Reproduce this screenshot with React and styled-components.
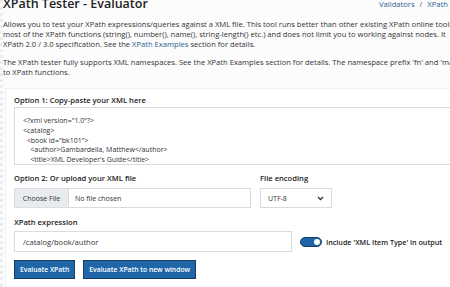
import React from 'react';
import styled, { createGlobalStyle } from 'styled-components';

const GlobalStyle = createGlobalStyle`
  html, body {
    margin: 0;
    padding: 0;
    background: #fcfcfd;
    overflow: hidden;
  }
  body {
    font-family: "Open Sans", "Liberation Sans", sans-serif;
    color: #333;
  }
`;

const Page = styled.div`
  width: 450px;
  height: 287px;
  overflow: hidden;
  border-left: 3px dotted #ececef;
  box-sizing: border-box;
`;

const Header = styled.div`
  display: flex;
  justify-content: space-between;
  align-items: center;
  margin-top: -3px;
  height: 13px;
  white-space: nowrap;
`;

const Title = styled.h1`
  margin: 0;
  font-size: 12.5px;
  line-height: 13px;
  font-weight: 600;
  color: #222;
`;

const Crumbs = styled.div`
  font-size: 7.6px;
  color: #2b5d8f;
  margin-right: -22px;
  margin-top: 1px;
  span {
    margin: 0 5px;
    color: #555;
  }
`;

const Text = styled.p`
  margin: ${(p) => p.$top || 0}px 0 0 0;
  font-size: 7.6px;
  line-height: 10px;
  white-space: nowrap;
  color: #333;
  a {
    color: #2b5d8f;
    text-decoration: none;
  }
`;

const Panel = styled.div`
  margin: 11px 0 0 2px;
  width: 640px;
  background: #fff;
  border: 1px solid #eef0f3;
  padding: 6px 0 8px 8px;
`;

const Label = styled.div`
  font-size: 7.6px;
  font-weight: 600;
  color: #222;
  margin-bottom: ${(p) => p.$gap ?? 4}px;
  line-height: 10px;
`;

const Code = styled.div`
  border: 1px solid #d9dbe0;
  height: 48px;
  box-sizing: content-box;
  overflow: hidden;
  padding: 8px 8px 0;
  font-size: 7px;
  line-height: 9.8px;
  color: #333;
  white-space: pre;
`;

const Row = styled.div`
  display: flex;
  align-items: ${(p) => p.$align || 'flex-start'};
  gap: ${(p) => p.$gap ?? 9}px;
  margin-top: ${(p) => p.$top || 0}px;
`;

const Field = styled.div`
  display: flex;
  flex-direction: column;
`;

const FileBox = styled.div`
  width: 237px;
  height: 20px;
  border: 1px solid #d9dbe0;
  display: flex;
  align-items: center;
  font-size: 7px;
  box-sizing: border-box;
`;

const FileButton = styled.div`
  background: #e9ecef;
  height: 100%;
  width: 54px;
  box-sizing: border-box;
  display: flex;
  align-items: center;
  justify-content: center;
  border-right: 1px solid #d9dbe0;
  margin-right: 6px;
`;

const Select = styled.div`
  width: 72px;
  height: 20px;
  border: 1px solid #d9dbe0;
  box-sizing: border-box;
  display: flex;
  align-items: center;
  justify-content: space-between;
  padding: 0 7px 0 7px;
  font-size: 7px;
`;

const Input = styled.div`
  width: 278px;
  height: 21px;
  border: 1px solid #d9dbe0;
  box-sizing: border-box;
  display: flex;
  align-items: center;
  padding-left: 8px;
  font-size: 7.6px;
`;

const Toggle = styled.div`
  width: 22px;
  height: 10px;
  border-radius: 6px;
  background: #1f66a8;
  border: 1px solid #163f66;
  box-sizing: border-box;
  position: relative;
  margin-left: -1px;
  &::after {
    content: '';
    position: absolute;
    right: 1px;
    top: 1px;
    width: 6px;
    height: 6px;
    border-radius: 50%;
    background: #fff;
  }
`;

const ToggleLabel = styled.span`
  font-size: 7.2px;
  font-weight: 600;
  color: #222;
  margin-left: -5px;
`;

const Button = styled.button`
  height: 19px;
  padding: 0 5px;
  background: #1f66a8;
  color: #fff;
  border: 1px solid #173c5e;
  font-family: inherit;
  font-size: 6.8px;
  font-weight: 600;
  cursor: pointer;
`;

const Chevron = () => (
  <svg width="7" height="5" viewBox="0 0 7 5">
    <path d="M1 1l2.5 2.5L6 1" fill="none" stroke="#333" strokeWidth="1.3" />
  </svg>
);

export default function App() {
  return (
    <>
      <GlobalStyle />
      <Page>
        <Header>
          <Title>XPath Tester - Evaluator</Title>
          <Crumbs>
            Validators<span>/</span>XPath Tester
          </Crumbs>
        </Header>
        <Text $top={9}>
          Allows you to test your XPath expressions/queries against a XML file. This tool runs better than other existing XPath online tools as
          <br />
          most of the XPath functions (string(), number(), name(), string-length() etc.) and does not limit you to working against nodes. It
          <br />
          XPath 2.0 / 3.0 specification. See the <a href="#">XPath Examples</a> section for details.
        </Text>
        <Text $top={8}>
          The XPath tester fully supports XML namespaces. See the XPath Examples section for details. The namespace prefix 'fn' and 'math'
          <br />
          to XPath functions.
        </Text>
        <Panel>
          <Label $gap={2}>Option 1: Copy-paste your XML here</Label>
          <Code>
            {`<?xml version="1.0"?>
<catalog>
  <book id="bk101">
    <author>Gambardella, Matthew</author>
    <title>XML Developer's Guide</title>`}
          </Code>
          <Row $top={8}>
            <Field>
              <Label $gap={5}>Option 2: Or upload your XML file</Label>
              <FileBox>
                <FileButton>Choose File</FileButton>
                No file chosen
              </FileBox>
            </Field>
            <Field>
              <Label $gap={5}>File encoding</Label>
              <Select>
                UTF-8
                <Chevron />
              </Select>
            </Field>
          </Row>
          <Row $top={9}>
            <Field>
              <Label>XPath expression</Label>
              <Row $align="center">
                <Input>/catalog/book/author</Input>
                <Toggle />
                <ToggleLabel>Include 'XML Item Type' in output</ToggleLabel>
              </Row>
            </Field>
          </Row>
          <Row $top={8} $gap={8}>
            <Button>Evaluate XPath</Button>
            <Button>Evaluate XPath to new window</Button>
          </Row>
        </Panel>
      </Page>
    </>
  );
}
